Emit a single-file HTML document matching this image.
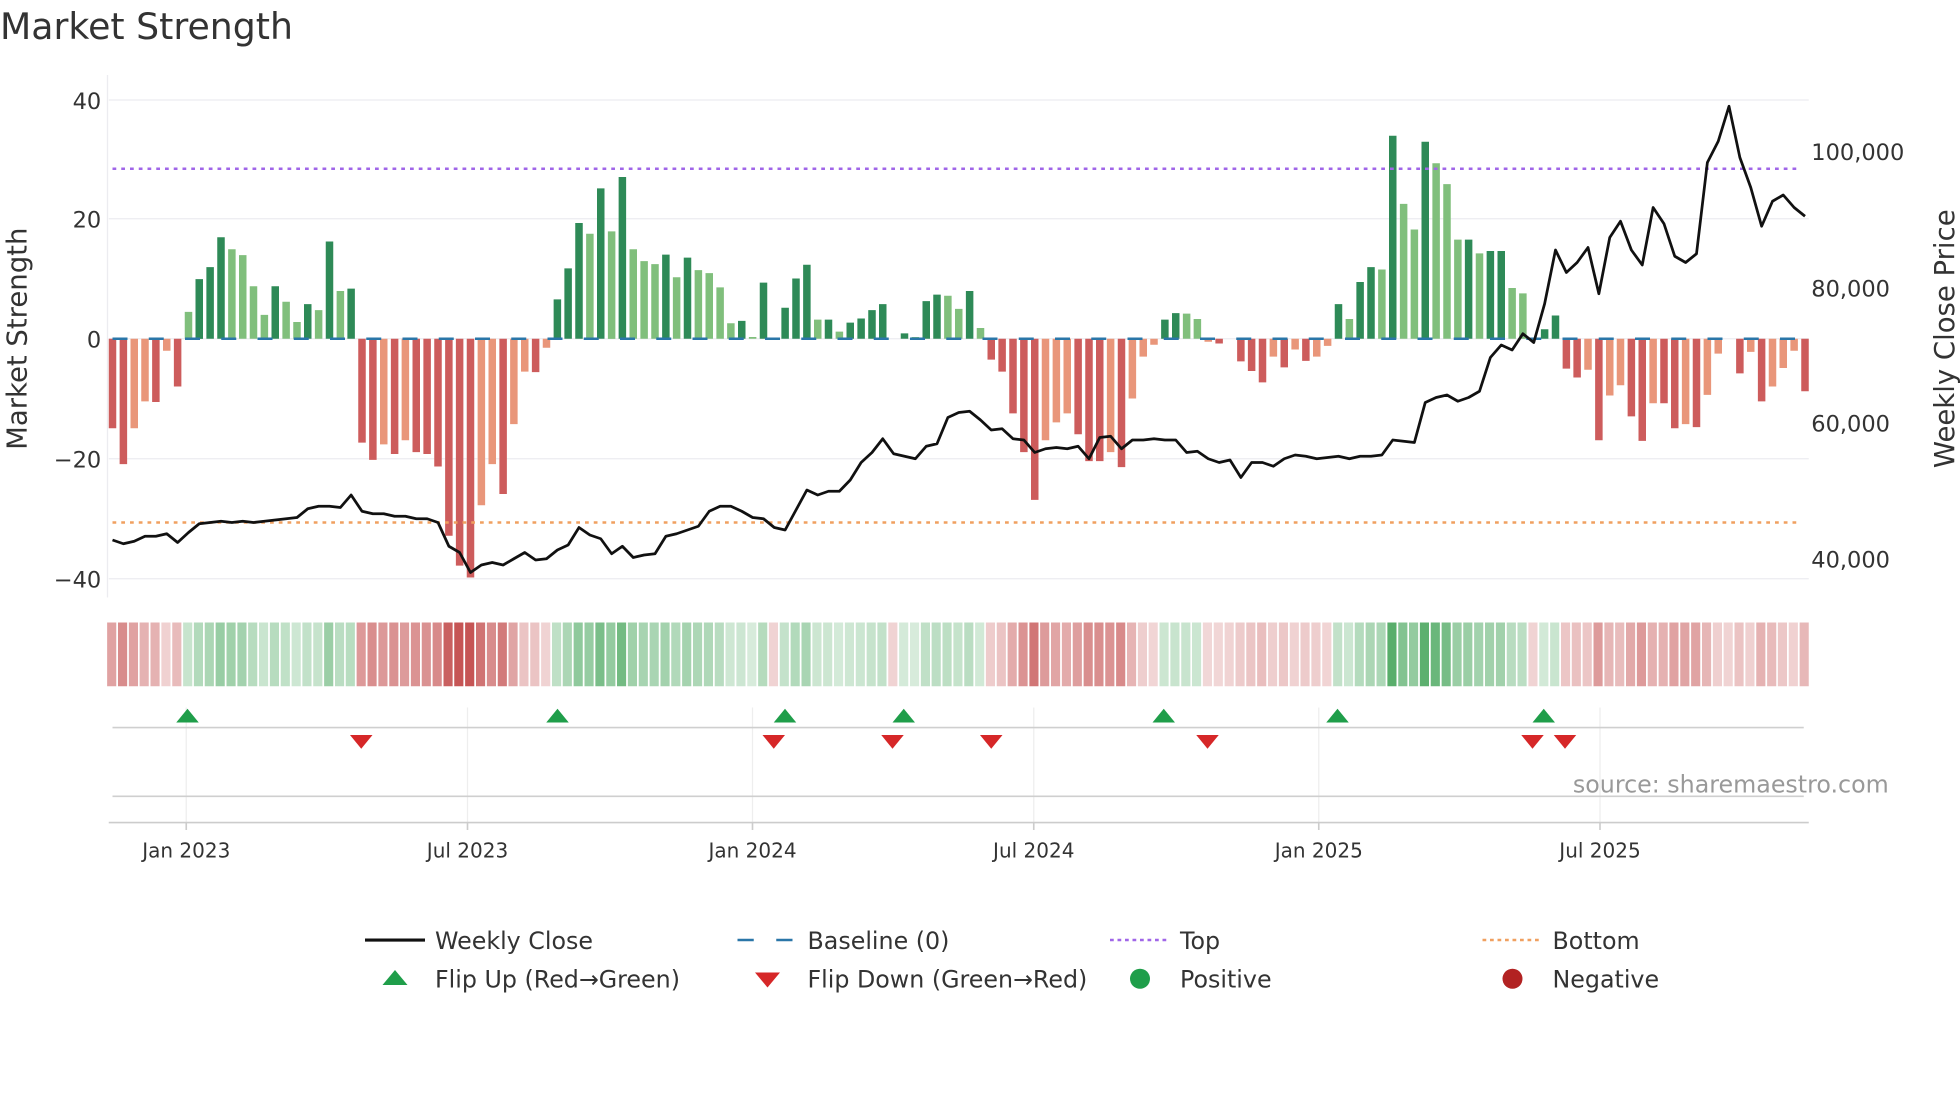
<!DOCTYPE html>
<html><head><meta charset="utf-8"><style>
html,body{margin:0;padding:0;background:#fff;}
svg{display:block;font-family:"DejaVu Sans","Liberation Sans",sans-serif;}
</style></head><body>
<svg id="s" width="1960" height="1102" viewBox="0 0 1568 881.6" xmlns="http://www.w3.org/2000/svg">
<rect width="1568" height="882" fill="#fff"/>
<text x="0" y="31" font-size="29" fill="#333">Market Strength</text>
<g stroke="#ececf0" stroke-width="1">
<line x1="87" y1="80" x2="1447" y2="80"/><line x1="87" y1="175" x2="1447" y2="175"/><line x1="87" y1="271" x2="1447" y2="271"/><line x1="87" y1="367" x2="1447" y2="367"/><line x1="87" y1="463" x2="1447" y2="463"/>
<line x1="86" y1="60" x2="86" y2="478"/>
</g>
<g font-size="18" fill="#333" text-anchor="end">
<text x="81" y="87">40</text><text x="81" y="182">20</text><text x="81" y="278">0</text><text x="81" y="374">−20</text><text x="81" y="470">−40</text>
</g>
<g font-size="18" fill="#333">
<text x="1449" y="128">100,000</text><text x="1449" y="237">80,000</text><text x="1449" y="345">60,000</text><text x="1449" y="454">40,000</text>
</g>
<text transform="translate(21,271) rotate(-90)" font-size="22" fill="#333" text-anchor="middle">Market Strength</text>
<text transform="translate(1563,271) rotate(-90)" font-size="22" fill="#333" text-anchor="middle">Weekly Close Price</text>
<g id="bars"></g>
<line x1="90" y1="271" x2="1444" y2="271" stroke="#2a76a8" stroke-width="2" stroke-dasharray="12,17"/>
<line x1="90" y1="135" x2="1440" y2="135" stroke="#a066e8" stroke-width="2" stroke-dasharray="3,4"/>
<line x1="90" y1="418" x2="1440" y2="418" stroke="#f0a060" stroke-width="2" stroke-dasharray="3,4"/>
<polyline id="price" fill="none" stroke="#111" stroke-width="2.2" stroke-linejoin="round"/>
<g id="strip"></g>
<g stroke="#eeeeee" stroke-width="1">
<line x1="149" y1="566" x2="149" y2="658"/><line x1="374" y1="566" x2="374" y2="658"/><line x1="602" y1="566" x2="602" y2="658"/><line x1="827" y1="566" x2="827" y2="658"/><line x1="1055" y1="566" x2="1055" y2="658"/><line x1="1280" y1="566" x2="1280" y2="658"/>
</g>
<line x1="90" y1="582" x2="1443" y2="582" stroke="#cfcfcf" stroke-width="1.3"/>
<line x1="90" y1="637" x2="1443" y2="637" stroke="#cfcfcf" stroke-width="1.3"/>
<g id="flips"></g>
<text x="1511" y="634" font-size="19" fill="#999" text-anchor="end">source: sharemaestro.com</text>
<line x1="87" y1="658" x2="1447" y2="658" stroke="#ccc" stroke-width="1.3"/>
<g stroke="#ccc" stroke-width="1.3">
<line x1="149" y1="658" x2="149" y2="664"/><line x1="374" y1="658" x2="374" y2="664"/><line x1="602" y1="658" x2="602" y2="664"/><line x1="827" y1="658" x2="827" y2="664"/><line x1="1055" y1="658" x2="1055" y2="664"/><line x1="1280" y1="658" x2="1280" y2="664"/>
</g>
<g font-size="16" fill="#333" text-anchor="middle">
<text x="149" y="686">Jan 2023</text><text x="374" y="686">Jul 2023</text><text x="602" y="686">Jan 2024</text><text x="827" y="686">Jul 2024</text><text x="1055" y="686">Jan 2025</text><text x="1280" y="686">Jul 2025</text>
</g>
<g font-size="19" fill="#333">
<line x1="292" y1="752" x2="340" y2="752" stroke="#111" stroke-width="2.5"/><text x="348" y="759">Weekly Close</text>
<line x1="590" y1="752" x2="636" y2="752" stroke="#2a76a8" stroke-width="2" stroke-dasharray="13,18"/><text x="646" y="759">Baseline (0)</text>
<line x1="888" y1="752" x2="934" y2="752" stroke="#a066e8" stroke-width="2" stroke-dasharray="3,3"/><text x="944" y="759">Top</text>
<line x1="1186" y1="752" x2="1232" y2="752" stroke="#f0a060" stroke-width="2" stroke-dasharray="3,3"/><text x="1242" y="759">Bottom</text>
<polygon points="306,788 316,776 326,788" fill="#1f9e4a"/><text x="348" y="790">Flip Up (Red→Green)</text>
<polygon points="604,778 624,778 614,790" fill="#d62728"/><text x="646" y="790">Flip Down (Green→Red)</text>
<circle cx="912" cy="783" r="8" fill="#1f9e4a"/><text x="944" y="790">Positive</text>
<circle cx="1210" cy="783" r="8" fill="#b22222"/><text x="1242" y="790">Negative</text>
</g>
</svg>
<script>
var v=[-15,-21,-15,-10.5,-10.6,-2,-8,4.5,10,12,17,15,14,8.8,4,8.8,6.2,2.8,5.8,4.8,16.3,8,8.4,
-17.4,-20.3,-17.7,-19.3,-17,-19,-19.3,-21.4,-33,-38,-40,-27.9,-21,-26,-14.3,-5.5,-5.6,-1.5,
6.6,11.8,19.4,17.6,25.2,18,27.1,15,13,12.5,14.1,10.3,13.6,11.5,11,8.6,2.6,3,0.3,9.4,0,5.2,10.1,12.4,3.2,3.2,1.2,2.7,3.4,4.8,5.8,0,0.9,0.3,6.3,7.4,7.2,5,8,1.8,
-3.5,-5.5,-12.5,-19,-27,-17,-14,-12.5,-16,-20.5,-20.5,-19,-21.5,-10,-3,-1,3.2,4.3,4.2,3.3,-0.5,-0.8,0,-3.8,-5.4,-7.3,-3,-4.8,-1.8,-3.7,-3,-1.2,
5.8,3.3,9.5,12,11.6,34,22.6,18.3,33,29.4,25.9,16.6,16.6,14.3,14.7,14.7,8.5,7.6,0,1.6,3.9,
-5,-6.5,-5.2,-17,-9.5,-7.8,-13,-17.1,-10.8,-10.8,-15,-14.3,-14.8,-9.4,-2.5,0,-5.8,-2.2,-10.5,-8,-4.9,-2,-8.8];
var p=[432,435,433,429,429,427,434,426,419,418,417,418,417,418,417,416,415,414,407,405,405,406,396,409,411,411,413,413,415,415,418,437,442,458,452,450,452,447,442,448,447,440,436,422,428,431,443,437,446,444,443,429,427,424,421,409,405,405,409,414,415,422,424,408,392,396,393,393,384,370,362,351,363,365,367,357,355,334,330,329,336,344,343,351,352,362,359,358,359,357,367,350,349,359,352,352,351,352,352,362,361,367,370,368,382,370,370,373,367,364,365,367,366,365,367,365,365,364,352,353,354,322,318,316,321,318,313,286,276,280,267,274,243,200,218,210,198,235,190,177,200,212,166,179,205,210,203,130,113,85,126,150,181,161,156,166,173];
var N=v.length,step=(1444-90)/(N-1),b='',s='',pts=[];
function mix(c,t){return 'rgb('+c.map(function(x){return Math.round(255+(x-255)*t)}).join(',')+')';}
for(var i=0;i<N;i++){
 var x=90+i*step,val=v[i],prev=i?Math.abs(v[i-1]):0,dark=Math.abs(val)>=prev;
 var y0=271,h=Math.abs(val)*4.775;
 if(val>0.05){b+='<rect x="'+(x-3).toFixed(1)+'" y="'+(y0-h).toFixed(1)+'" width="6" height="'+h.toFixed(1)+'" fill="'+(dark?'#2e8a57':'#80bf7c')+'"/>';}
 else if(val<-0.05){b+='<rect x="'+(x-3).toFixed(1)+'" y="'+y0+'" width="6" height="'+h.toFixed(1)+'" fill="'+(dark?'#cd5c5c':'#e9967a')+'"/>';}
 var t=0.22+0.75*Math.min(1,Math.abs(val)/36);
 var col=val>0?mix([76,168,96],t):mix([196,80,80],t);
 if(val===0)col=mix([196,80,80],0.25);
 s+='<rect x="'+(x-4.3).toFixed(1)+'" y="498" width="'+(step-1.4).toFixed(1)+'" height="51" fill="'+col+'"/>';
 if(i<p.length)pts.push(x.toFixed(1)+','+p[i]);
}
document.getElementById('bars').innerHTML=b;
document.getElementById('strip').innerHTML=s;
document.getElementById('price').setAttribute('points',pts.join(' '));
var up=[150,446,628,723,931,1070,1235],dn=[289,619,714,793,966,1226,1252],f='';
up.forEach(function(x){f+='<polygon points="'+(x-9)+',578 '+x+',567 '+(x+9)+',578" fill="#1f9e4a"/>';});
dn.forEach(function(x){f+='<polygon points="'+(x-9)+',588 '+(x+9)+',588 '+x+',599" fill="#d62728"/>';});
document.getElementById('flips').innerHTML=f;
</script>
</body></html>
